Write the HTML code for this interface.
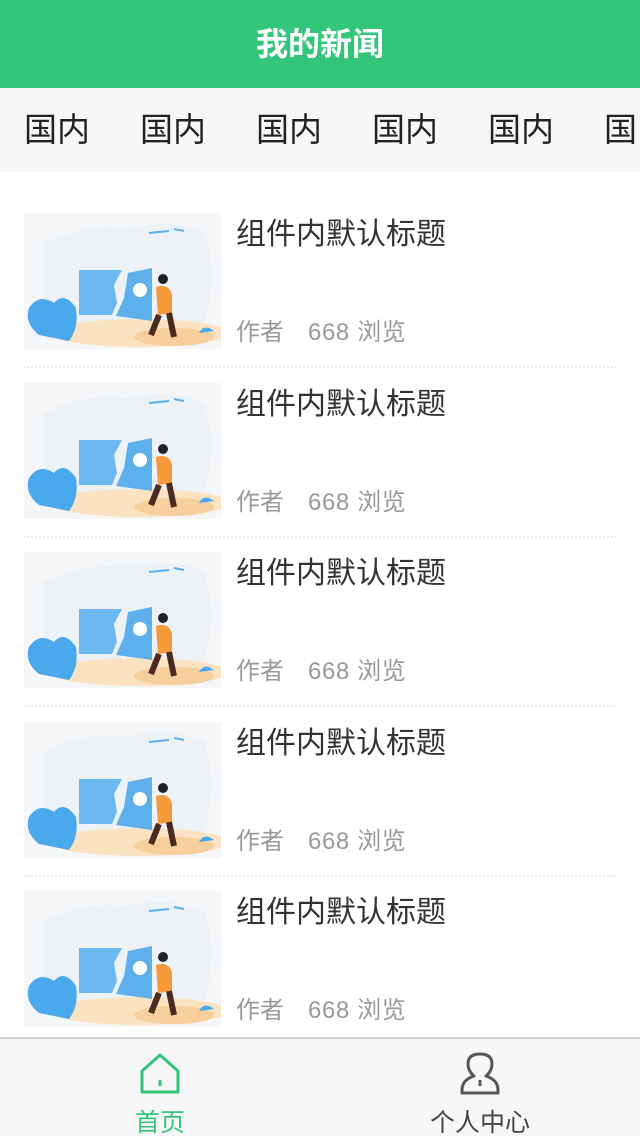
<!DOCTYPE html>
<html><head><meta charset="utf-8"><style>
*{margin:0;padding:0;box-sizing:border-box}
body{width:640px;height:1136px;overflow:hidden;background:#fff;font-family:"Liberation Sans","Noto Sans CJK SC",sans-serif;position:relative}
.hd{height:88px;background:#33c57a;color:#fff;font-size:32px;font-weight:bold;text-align:center;line-height:88px}
.tabs{height:84px;background:#f6f7f9;white-space:nowrap;overflow:hidden;position:relative}
.tabs span{position:absolute;top:0;line-height:84px;font-size:33px;color:#222}
.item{position:absolute;left:24px;width:592px;height:170px}
.item svg{position:absolute;left:0;top:0}
.t{position:absolute;left:212px;top:2px;font-size:30px;color:#333;line-height:40px}
.m{position:absolute;left:212px;top:102px;font-size:24px;color:#999;line-height:36px}
.m b{font-weight:normal;position:absolute;left:72px;white-space:nowrap;letter-spacing:0.6px}
.sep{position:absolute;left:0;top:153px;width:592px;border-top:2px dotted #eee}
.bar{position:absolute;left:0;top:1037px;width:640px;height:99px;background:#f7f7f9;border-top:2px solid #d0d0d0}
.bi{position:absolute;top:0;width:320px;text-align:center}
.bi div{position:absolute;top:64px;width:320px;text-align:center;font-size:25px}
</style></head><body>
<div class="hd">我的新闻</div>
<div class="tabs">
<span style="left:24px">国内</span><span style="left:140px">国内</span><span style="left:256px">国内</span><span style="left:372px">国内</span><span style="left:488px">国内</span><span style="left:604px">国内</span>
</div>
<svg width="0" height="0" style="position:absolute"><defs><symbol id="im" viewBox="0 0 197 136">
<rect width="197" height="136" fill="#f5f6f8"/>
<path d="M20 30 Q60 10 100 15 Q150 5 180 20 Q195 60 180 110 L20 115 Z" fill="#edf2f7"/>
<ellipse cx="115" cy="120" rx="90" ry="14" fill="#fbe3c2"/>
<ellipse cx="150" cy="124" rx="40" ry="9" fill="#f6cf9c"/>
<path d="M55 57 L98 57 L90 72 L93 90 L88 102 L55 102 Z" fill="#6bb9f0"/>
<path d="M104 60 L128 55 L128 108 L92 103 L100 85 Z" fill="#5eb0ec"/>
<circle cx="116" cy="77" r="7" fill="#fff"/>
<path d="M5 95 Q15 80 30 90 Q40 78 52 95 Q55 115 45 128 L15 122 Q0 110 5 95Z" fill="#4aa8ec"/>
<path d="M175 120 Q180 110 190 118 Z" fill="#4aa8ec"/>
<circle cx="139" cy="66" r="5" fill="#222"/>
<path d="M132 74 Q145 70 148 82 L148 100 L134 102 Z" fill="#f6993a"/>
<path d="M135 102 L127 122 M145 100 L150 124" stroke="#4a2b22" stroke-width="6"/>
<path d="M125 20 L145 18 M150 16 L160 18" stroke="#5ab0ee" stroke-width="2"/>
</symbol></defs></svg>
<div class="item" style="top:213px"><svg width="197" height="136"><use href="#im"/></svg><div class="t">组件内默认标题</div><div class="m">作者<b>668 浏览</b></div><div class="sep"></div></div>
<div class="item" style="top:383px"><svg width="197" height="136"><use href="#im"/></svg><div class="t">组件内默认标题</div><div class="m">作者<b>668 浏览</b></div><div class="sep"></div></div>
<div class="item" style="top:552px"><svg width="197" height="136"><use href="#im"/></svg><div class="t">组件内默认标题</div><div class="m">作者<b>668 浏览</b></div><div class="sep"></div></div>
<div class="item" style="top:722px"><svg width="197" height="136"><use href="#im"/></svg><div class="t">组件内默认标题</div><div class="m">作者<b>668 浏览</b></div><div class="sep"></div></div>
<div class="item" style="top:891px"><svg width="197" height="136"><use href="#im"/></svg><div class="t">组件内默认标题</div><div class="m">作者<b>668 浏览</b></div></div>
<div class="bar">
<div class="bi" style="left:0"><svg style="position:absolute;left:140px;top:14px" width="40" height="42" viewBox="0 0 40 42"><path d="M2 18 L20 2 L38 18 L38 39 L2 39 Z" fill="none" stroke="#33c57a" stroke-width="3" stroke-linejoin="round"/><path d="M20 27 L20 33" stroke="#33c57a" stroke-width="3"/></svg><div style="color:#33c57a">首页</div></div>
<div class="bi" style="left:320px"><svg style="position:absolute;left:140px;top:13px" width="40" height="44" viewBox="0 0 40 44"><path d="M14 24 Q8 19 8 12 Q8 2 20 2 Q32 2 32 12 Q32 19 26 24 Q38 28 38 38 L38 41 L2 41 L2 38 Q2 28 14 24 Z" fill="none" stroke="#555" stroke-width="3" stroke-linejoin="round"/><path d="M20 28 L20 34" stroke="#555" stroke-width="3"/></svg><div style="color:#444">个人中心</div></div>
</div>
</body></html>
